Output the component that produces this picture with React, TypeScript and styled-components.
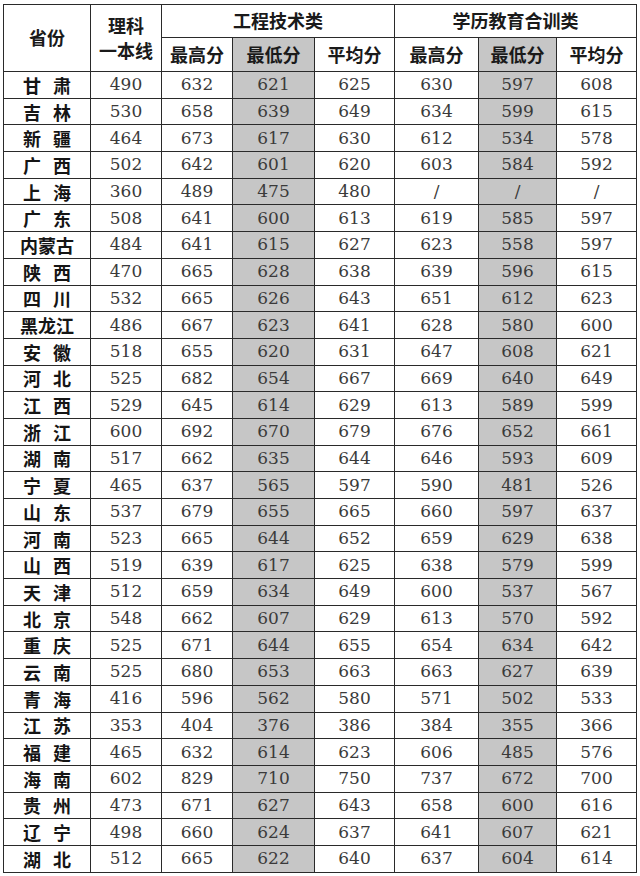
import styled, { createGlobalStyle } from 'styled-components'

const GlobalStyle = createGlobalStyle`
    html, body {
        margin: 0;
        padding: 0;
        background: #fff;
    }
`

type Row = [string, string, string, string, string, string, string, string]

const rows: Row[] = [
    ['甘肃', '490', '632', '621', '625', '630', '597', '608'],
    ['吉林', '530', '658', '639', '649', '634', '599', '615'],
    ['新疆', '464', '673', '617', '630', '612', '534', '578'],
    ['广西', '502', '642', '601', '620', '603', '584', '592'],
    ['上海', '360', '489', '475', '480', '/', '/', '/'],
    ['广东', '508', '641', '600', '613', '619', '585', '597'],
    ['内蒙古', '484', '641', '615', '627', '623', '558', '597'],
    ['陕西', '470', '665', '628', '638', '639', '596', '615'],
    ['四川', '532', '665', '626', '643', '651', '612', '623'],
    ['黑龙江', '486', '667', '623', '641', '628', '580', '600'],
    ['安徽', '518', '655', '620', '631', '647', '608', '621'],
    ['河北', '525', '682', '654', '667', '669', '640', '649'],
    ['江西', '529', '645', '614', '629', '613', '589', '599'],
    ['浙江', '600', '692', '670', '679', '676', '652', '661'],
    ['湖南', '517', '662', '635', '644', '646', '593', '609'],
    ['宁夏', '465', '637', '565', '597', '590', '481', '526'],
    ['山东', '537', '679', '655', '665', '660', '597', '637'],
    ['河南', '523', '665', '644', '652', '659', '629', '638'],
    ['山西', '519', '639', '617', '625', '638', '579', '599'],
    ['天津', '512', '659', '634', '649', '600', '537', '567'],
    ['北京', '548', '662', '607', '629', '613', '570', '592'],
    ['重庆', '525', '671', '644', '655', '654', '634', '642'],
    ['云南', '525', '680', '653', '663', '663', '627', '639'],
    ['青海', '416', '596', '562', '580', '571', '502', '533'],
    ['江苏', '353', '404', '376', '386', '384', '355', '366'],
    ['福建', '465', '632', '614', '623', '606', '485', '576'],
    ['海南', '602', '829', '710', '750', '737', '672', '700'],
    ['贵州', '473', '671', '627', '643', '658', '600', '616'],
    ['辽宁', '498', '660', '624', '637', '641', '607', '621'],
    ['湖北', '512', '665', '622', '640', '637', '604', '614'],
]

const colWidths = [87, 71, 71, 82, 80, 84, 78, 80]
const shaded = [3, 6]

const App = () => {
    return <Page>
        <GlobalStyle />
        <Table>
            <colgroup>
                {colWidths.map((w, i) => <col key={i} style={{ width: w }} />)}
            </colgroup>
            <thead>
                <TopRow>
                    <HeadCell rowSpan={2}>省份</HeadCell>
                    <HeadCell rowSpan={2}>
                        <Line>理科</Line>
                        <Line>一本线</Line>
                    </HeadCell>
                    <HeadCell colSpan={3}>工程技术类</HeadCell>
                    <HeadCell colSpan={3}>学历教育合训类</HeadCell>
                </TopRow>
                <SubRow>
                    <HeadCell>最高分</HeadCell>
                    <HeadCell $shade>最低分</HeadCell>
                    <HeadCell>平均分</HeadCell>
                    <HeadCell>最高分</HeadCell>
                    <HeadCell $shade>最低分</HeadCell>
                    <HeadCell>平均分</HeadCell>
                </SubRow>
            </thead>
            <tbody>
                {rows.map(r => (
                    <DataRow key={r[0]}>
                        <NameCell $spread={r[0].length === 2}>{r[0]}</NameCell>
                        {r.slice(1).map((v, i) => (
                            <NumCell key={i} $shade={shaded.includes(i + 1)}>{v}</NumCell>
                        ))}
                    </DataRow>
                ))}
            </tbody>
        </Table>
    </Page>
}

export default App

const Page = styled.div`
    width: 640px;
    height: 876px;
    padding: 4px 0 0 3px;
    box-sizing: border-box;
    background: #fff;
    overflow: hidden;
`

const Table = styled.table`
    border-collapse: collapse;
    table-layout: fixed;
    width: 633px;
    border: 1.5px solid #1e1e1e;
    td, th {
        border: 1px solid #2a2a2a;
        padding: 0;
        text-align: center;
        vertical-align: middle;
    }
`

const TopRow = styled.tr`
    height: 33px;
`

const SubRow = styled.tr`
    height: 34px;
`

const DataRow = styled.tr`
    height: 26.7px;
`

const HeadCell = styled.th<{ $shade?: boolean }>`
    font-family: "Noto Sans CJK SC", "Noto Sans", sans-serif;
    font-size: 18px;
    font-weight: 700;
    color: #1a1a1a;
    line-height: 1.1;
    background: ${p => p.$shade ? '#c6c6c6' : '#fff'};
`

const Line = styled.span`
    display: block;
    height: 25px;
    line-height: 25px;
    overflow: visible;
`

const NameCell = styled.td<{ $spread: boolean }>`
    font-family: "Noto Sans CJK SC", "Noto Sans", sans-serif;
    font-size: 18px;
    font-weight: 700;
    color: #151515;
    line-height: 1;
    letter-spacing: ${p => p.$spread ? '12px' : '0'};
    text-indent: ${p => p.$spread ? '12px' : '0'};
`

const NumCell = styled.td<{ $shade: boolean }>`
    font-family: "DejaVu Serif", "Liberation Serif", serif;
    font-size: 17px;
    color: #3a3a3a;
    line-height: 1;
    background: ${p => p.$shade ? '#c6c6c6' : '#fff'};
`
